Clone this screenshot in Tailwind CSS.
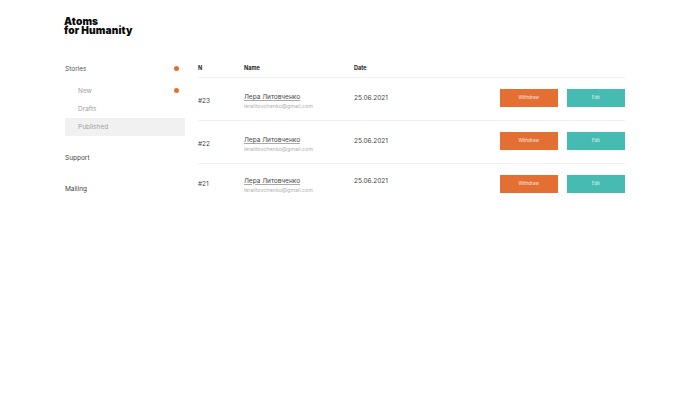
<!DOCTYPE html>
<html lang="en">
  <head>
    <meta charset="UTF-8">
    <title>Atoms for Humanity</title>
    <script src="https://cdn.jsdelivr.net/npm/@tailwindcss/browser@4"></script>
  </head>
  <body class="bg-white font-['Inter','Liberation_Sans',sans-serif]">
    <div class="h-[193px] w-[690px] overflow-hidden">
      <!-- Logo -->
      <div class="pl-[64px] pt-[17px] h-[60px] text-[10.2px] leading-[8.5px] font-black tracking-[0.1px] text-[#0b0b0b]">
        <div>Atoms</div>
        <div>for Humanity</div>
      </div>

      <div class="flex pl-[65px]">
        <!-- Sidebar -->
        <aside class="w-[120px] shrink-0 -mt-[1px] text-[6.5px]">
          <div class="flex items-center justify-between h-[18px] pr-[6px] text-[#555]">
            <span class="pt-[3px]">Stories</span>
            <span class="w-[5px] h-[5px] rounded-full bg-[#e36f33]"></span>
          </div>
          <div class="mt-[4.5px] flex items-center justify-between h-[18px] pl-[13px] pr-[6px] text-[#a0a0a0]">
            <span class="pt-[2px]">New</span>
            <span class="w-[5px] h-[5px] rounded-full bg-[#e36f33]"></span>
          </div>
          <div class="flex items-center h-[18px] pl-[13px] pt-[2px] text-[#a0a0a0]">Drafts</div>
          <div class="flex items-center h-[18px] pl-[13px] pt-[2px] bg-[#f1f1f1] text-[#a0a0a0]">Published</div>
          <div class="mt-[13px] flex items-center h-[18px] pt-[3px] text-[#444]">Support</div>
          <div class="mt-[13px] flex items-center h-[18px] pt-[3px] text-[#444]">Mailing</div>
        </aside>

        <!-- Table -->
        <main class="ml-[13px] w-[427px]">
          <div class="flex items-center h-[18px] border-b border-[#f0f0f0] text-[5.5px] font-bold text-[#222]">
            <span class="w-[46px]">N</span>
            <span class="w-[110px]">Name</span>
            <span>Date</span>
          </div>

          <div class="flex items-start h-[43px] border-b border-[#f0f0f0]">
            <span class="w-[46px] pt-[18px] text-[6.5px] leading-[10px] text-[#444]">#23</span>
            <div class="w-[110px] pt-[14px]">
              <div class="text-[6.5px] leading-[10px] text-[#444] underline decoration-[#aaa]">Лера Литовченко</div>
              <div class="text-[5.3px] leading-[9px] text-[#b0b0b0]">leralitovchenko@gmail.com</div>
            </div>
            <span class="pt-[14.5px] text-[6.5px] leading-[10px] text-[#444]">25.06.2021</span>
            <div class="ml-auto pt-[11px] flex gap-[8.5px]">
              <button class="w-[58.5px] h-[18px] bg-[#e36f33] text-[4.6px] text-white/80">Withdraw</button>
              <button class="w-[58.5px] h-[18px] bg-[#45bbb1] text-[4.6px] text-white/80">Edit</button>
            </div>
          </div>

          <div class="flex items-start h-[43px] border-b border-[#f0f0f0]">
            <span class="w-[46px] pt-[18px] text-[6.5px] leading-[10px] text-[#444]">#22</span>
            <div class="w-[110px] pt-[14px]">
              <div class="text-[6.5px] leading-[10px] text-[#444] underline decoration-[#aaa]">Лера Литовченко</div>
              <div class="text-[5.3px] leading-[9px] text-[#b0b0b0]">leralitovchenko@gmail.com</div>
            </div>
            <span class="pt-[14.5px] text-[6.5px] leading-[10px] text-[#444]">25.06.2021</span>
            <div class="ml-auto pt-[11px] flex gap-[8.5px]">
              <button class="w-[58.5px] h-[18px] bg-[#e36f33] text-[4.6px] text-white/80">Withdraw</button>
              <button class="w-[58.5px] h-[18px] bg-[#45bbb1] text-[4.6px] text-white/80">Edit</button>
            </div>
          </div>

          <div class="flex items-start h-[43px]">
            <span class="w-[46px] pt-[15px] text-[6.5px] leading-[10px] text-[#444]">#21</span>
            <div class="w-[110px] pt-[11.5px]">
              <div class="text-[6.5px] leading-[10px] text-[#444] underline decoration-[#aaa]">Лера Литовченко</div>
              <div class="text-[5.3px] leading-[9px] text-[#b0b0b0]">leralitovchenko@gmail.com</div>
            </div>
            <span class="pt-[12px] text-[6.5px] leading-[10px] text-[#444]">25.06.2021</span>
            <div class="ml-auto pt-[11px] flex gap-[8.5px]">
              <button class="w-[58.5px] h-[18px] bg-[#e36f33] text-[4.6px] text-white/80">Withdraw</button>
              <button class="w-[58.5px] h-[18px] bg-[#45bbb1] text-[4.6px] text-white/80">Edit</button>
            </div>
          </div>
        </main>
      </div>
    </div>
  </body>
</html>
